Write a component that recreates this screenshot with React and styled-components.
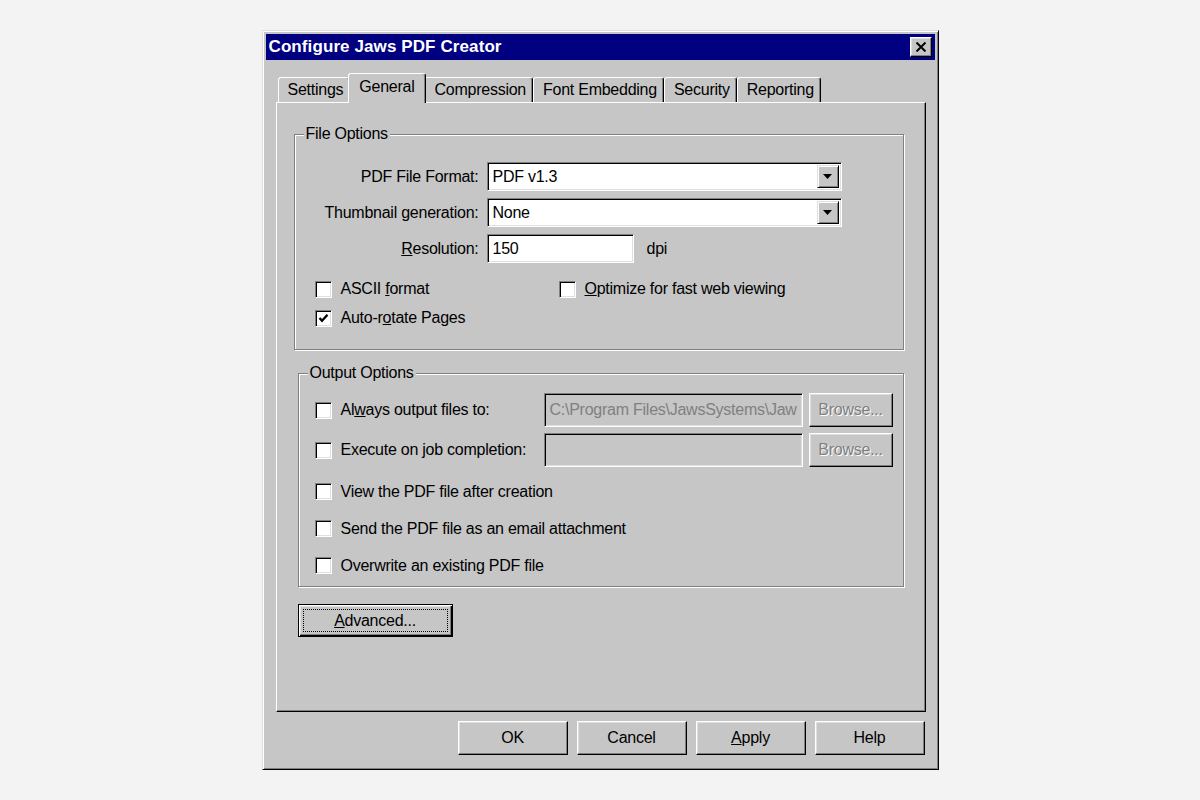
import React from "react";
import styled, { createGlobalStyle } from "styled-components";

const GlobalStyle = createGlobalStyle`
  html, body {
    margin: 0;
    padding: 0;
    background: #f3f3f3;
  }
  body {
    font-family: "Liberation Sans", Arial, sans-serif;
  }
`;

const FACE = "#c6c6c6";

const Page = styled.div`
  width: 1200px;
  height: 800px;
  box-sizing: border-box;
  padding-top: 30px;
  display: flex;
  justify-content: center;
  align-items: flex-start;
`;

const Window = styled.div`
  width: 677px;
  height: 740px;
  box-sizing: border-box;
  background: ${FACE};
  border: 1px solid;
  border-color: #dfdfdf #000 #000 #dfdfdf;
  box-shadow: inset 1px 1px #fff, inset -1px -1px #808080;
  padding: 3px;
  display: flex;
  flex-direction: column;
  font-size: 16px;
  letter-spacing: -0.25px;
  color: #000;
`;

const TitleBar = styled.div`
  height: 26px;
  flex: none;
  background: #000080;
  display: flex;
  align-items: center;
  justify-content: space-between;
  padding: 0 3px 0 3px;
`;

const Title = styled.span`
  color: #fff;
  font-weight: bold;
  font-size: 17px;
  letter-spacing: 0.1px;
`;

const CloseBox = styled.div`
  width: 22px;
  height: 20px;
  box-sizing: border-box;
  background: ${FACE};
  border: 1px solid;
  border-color: #fff #000 #000 #fff;
  box-shadow: inset -1px -1px #808080, inset 1px 1px #dfdfdf;
  display: flex;
  align-items: center;
  justify-content: center;
`;

const Body = styled.div`
  flex: 1;
  display: flex;
  flex-direction: column;
  padding: 13px 9px 11px 10px;
`;

const TabStrip = styled.div`
  height: 29px;
  flex: none;
  display: flex;
  align-items: flex-end;
  padding-left: 2px;
`;

const Tab = styled.div`
  position: relative;
  z-index: ${p => (p.$active ? 2 : 0)};
  height: ${p => (p.$active ? 30 : 25)}px;
  box-sizing: border-box;
  margin: 0 ${p => (p.$active ? -2 : 0)}px ${p => (p.$active ? -1 : 0)}px;
  padding: ${p => (p.$active ? "4px 11px 0 10px" : "3px 6px 0 9px")};
  background: ${FACE};
  border: 1px solid;
  border-bottom: none;
  border-color: #fff #000 transparent #fff;
  border-radius: 3px 3px 0 0;
  box-shadow: inset -1px 0 #808080;
  line-height: 18px;
  white-space: nowrap;
`;

const Panel = styled.div`
  position: relative;
  z-index: 1;
  flex: 1;
  display: flex;
  flex-direction: column;
  align-items: flex-start;
  border: 1px solid;
  border-color: #fff #000 #000 #fff;
  box-shadow: inset -1px -1px #808080;
  padding: 22px 21px 0 17px;
`;

const Group = styled.fieldset`
  align-self: stretch;
  margin: ${p => p.$top || 0}px 0 0 ${p => p.$indent || 0}px;
  padding: 0;
  min-width: 0;
  border: 1px solid #808080;
  box-shadow: inset 1px 1px #fff, 1px 1px #fff;
`;

const Legend = styled.legend`
  margin-left: 9px;
  padding: 0 2px;
  line-height: 18px;
  background: ${FACE};
`;

const GroupBody = styled.div`
  padding: ${p => p.$pad};
  display: flex;
  flex-direction: column;
`;

const FieldRow = styled.div`
  height: 29px;
  display: flex;
  align-items: center;
  margin-bottom: 7px;
`;

const FieldLabel = styled.span`
  width: 184px;
  margin-right: 8px;
  text-align: right;
  white-space: nowrap;
`;

const Sunken = styled.div`
  box-sizing: border-box;
  height: ${p => p.$h || 29}px;
  width: ${p => p.$w}px;
  flex: none;
  background: ${p => (p.$disabled ? FACE : "#fff")};
  color: ${p => (p.$disabled ? "#808080" : "#000")};
  border: 1px solid;
  border-color: #808080 #fff #fff #808080;
  box-shadow: inset 1px 1px #000, inset -1px -1px #dfdfdf;
  display: flex;
  align-items: center;
  padding: 2px 2px 2px 5px;
  overflow: hidden;
  white-space: nowrap;
`;

const FieldText = styled.span`
  flex: 1;
  min-width: 0;
  overflow: hidden;
`;

const DropButton = styled.div`
  width: 22px;
  flex: none;
  align-self: stretch;
  box-sizing: border-box;
  background: ${FACE};
  border: 1px solid;
  border-color: #dfdfdf #000 #000 #dfdfdf;
  box-shadow: inset 1px 1px #fff, inset -1px -1px #808080;
  display: flex;
  align-items: center;
  justify-content: center;
`;

const Unit = styled.span`
  margin-left: 13px;
`;

const CheckGrid = styled.div`
  display: grid;
  grid-template-columns: 244px 1fr;
  grid-auto-rows: 20px;
  row-gap: 9px;
  margin-top: 9px;
  padding-left: 20px;
`;

const CheckRow = styled.label`
  display: flex;
  align-items: center;
  white-space: nowrap;
  width: ${p => (p.$w ? `${p.$w}px` : "auto")};
  flex: none;
`;

const Box = styled.span`
  width: 17px;
  height: 17px;
  flex: none;
  box-sizing: border-box;
  margin-right: 9px;
  background: #fff;
  border: 1px solid;
  border-color: #808080 #fff #fff #808080;
  box-shadow: inset 1px 1px #000, inset -1px -1px #dfdfdf;
  display: flex;
  align-items: center;
  justify-content: center;
`;

const OutputRow = styled.div`
  display: flex;
  align-items: center;
  height: ${p => p.$h}px;
  margin-bottom: ${p => p.$gap || 0}px;
`;

const Button = styled.button`
  box-sizing: border-box;
  width: ${p => p.$w}px;
  height: ${p => p.$h || 34}px;
  flex: none;
  background: ${FACE};
  font: inherit;
  letter-spacing: inherit;
  color: #000;
  padding: 0;
  border: 1px solid;
  border-color: #fff #000 #000 #fff;
  box-shadow: inset -1px -1px #808080, inset 1px 1px #dfdfdf;
`;

const BrowseButton = styled(Button)`
  margin-left: 6px;
  color: #808080;
  text-shadow: 1px 1px #fff;
`;

const DefaultButton = styled(Button)`
  margin: 17px 0 0 4px;
  border-color: #000;
  box-shadow: inset 1px 1px #fff, inset -1px -1px #000, inset -2px -2px #808080,
    inset 2px 2px #dfdfdf;
  outline: 1px dotted #000;
  outline-offset: -6px;
`;

const ButtonBar = styled.div`
  display: flex;
  justify-content: flex-end;
  gap: 9px;
  margin-top: 9px;
  padding-right: 1px;
`;

const CloseGlyph = () => (
  <svg width="12" height="10" viewBox="0 0 12 10">
    <path d="M1.5 0.5 L10.5 9.5 M10.5 0.5 L1.5 9.5" stroke="#000" strokeWidth="2" />
  </svg>
);

const ArrowDown = () => (
  <svg width="9" height="5" viewBox="0 0 9 5">
    <path d="M0 0 H9 L4.5 5 Z" fill="#000" />
  </svg>
);

const CheckMark = () => (
  <svg width="11" height="11" viewBox="0 0 11 11">
    <path d="M1.5 5 L4 7.8 L9.5 1.8" fill="none" stroke="#000" strokeWidth="2.3" />
  </svg>
);

const Checkbox = ({ checked, children, w }) => (
  <CheckRow $w={w}>
    <Box>{checked && <CheckMark />}</Box>
    <span>{children}</span>
  </CheckRow>
);

const Select = ({ value }) => (
  <Sunken $w={355}>
    <FieldText>{value}</FieldText>
    <DropButton>
      <ArrowDown />
    </DropButton>
  </Sunken>
);

const tabs = ["Settings", "General", "Compression", "Font Embedding", "Security", "Reporting"];

export default function App() {
  return (
    <Page>
      <GlobalStyle />
      <Window>
        <TitleBar>
          <Title>Configure Jaws PDF Creator</Title>
          <CloseBox>
            <CloseGlyph />
          </CloseBox>
        </TitleBar>
        <Body>
          <TabStrip>
            {tabs.map(t => (
              <Tab key={t} $active={t === "General"}>
                {t}
              </Tab>
            ))}
          </TabStrip>
          <Panel>
            <Group>
              <Legend>File Options</Legend>
              <GroupBody $pad="19px 0 21px 0">
                <FieldRow>
                  <FieldLabel>PDF File Format:</FieldLabel>
                  <Select value="PDF v1.3" />
                </FieldRow>
                <FieldRow>
                  <FieldLabel>
                    Thumbnail <u>g</u>eneration:
                  </FieldLabel>
                  <Select value="None" />
                </FieldRow>
                <FieldRow>
                  <FieldLabel>
                    <u>R</u>esolution:
                  </FieldLabel>
                  <Sunken $w={147}>150</Sunken>
                  <Unit>dpi</Unit>
                </FieldRow>
                <CheckGrid>
                  <Checkbox>
                    ASCII <u>f</u>ormat
                  </Checkbox>
                  <Checkbox>
                    <u>O</u>ptimize for fast web viewing
                  </Checkbox>
                  <Checkbox checked>
                    Auto-r<u>o</u>tate Pages
                  </Checkbox>
                </CheckGrid>
              </GroupBody>
            </Group>

            <Group $top={14} $indent={4}>
              <Legend>Output Options</Legend>
              <GroupBody $pad="11px 0 2px 16px">
                <OutputRow $h={34} $gap={6}>
                  <Checkbox w={229}>
                    Al<u>w</u>ays output files to:
                  </Checkbox>
                  <Sunken $w={259} $h={34} $disabled>
                    <FieldText>C:\Program Files\JawsSystems\Jaw</FieldText>
                  </Sunken>
                  <BrowseButton $w={84}>Browse...</BrowseButton>
                </OutputRow>
                <OutputRow $h={34} $gap={6}>
                  <Checkbox w={229}>Execute on job completion:</Checkbox>
                  <Sunken $w={259} $h={34} $disabled />
                  <BrowseButton $w={84}>Browse...</BrowseButton>
                </OutputRow>
                <OutputRow $h={37}>
                  <Checkbox>View the PDF file after creation</Checkbox>
                </OutputRow>
                <OutputRow $h={37}>
                  <Checkbox>Send the PDF file as an email attachment</Checkbox>
                </OutputRow>
                <OutputRow $h={37}>
                  <Checkbox>Overwrite an existing PDF file</Checkbox>
                </OutputRow>
              </GroupBody>
            </Group>

            <DefaultButton $w={155} $h={33}>
              <u>A</u>dvanced...
            </DefaultButton>
          </Panel>
          <ButtonBar>
            <Button $w={110}>OK</Button>
            <Button $w={110}>Cancel</Button>
            <Button $w={110}>
              <u>A</u>pply
            </Button>
            <Button $w={110}>Help</Button>
          </ButtonBar>
        </Body>
      </Window>
    </Page>
  );
}
